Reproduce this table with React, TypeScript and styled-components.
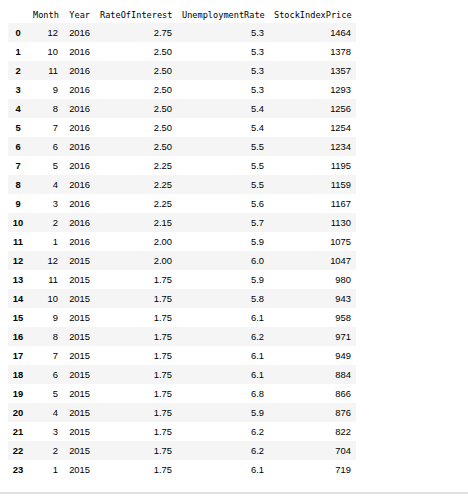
import React from "react";
import styled, { createGlobalStyle } from "styled-components";

const Global = createGlobalStyle`
  html, body { margin: 0; padding: 0; background: #fff; }
  body { width: 468px; height: 496px; overflow: hidden; }
`;

const Page = styled.div`
  width: 468px;
  height: 496px;
  display: flex;
  flex-direction: column;
  box-sizing: border-box;
`;

const Output = styled.div`
  flex: 1;
  padding: 0 0 0 8px;
`;

const Rule = styled.div`
  height: 2px;
  background: #e0e0e0;
  margin-bottom: 2px;
`;

const Table = styled.table`
  border-collapse: collapse;
  border-spacing: 0;
  table-layout: fixed;
  width: 348px;
  color: #000;
`;

const HeadCell = styled.th`
  font-family: "DejaVu Sans Mono", "Liberation Mono", monospace;
  font-size: 8.6px;
  font-weight: normal;
  text-align: right;
  height: 23px;
  box-sizing: border-box;
  padding: 0 5px 3px 5px;
  vertical-align: bottom;
  line-height: 10px;
  white-space: nowrap;
`;

const Row = styled.tr<{ $striped: boolean }>`
  background: ${(p) => (p.$striped ? "#f5f5f5" : "transparent")};
`;

const IndexCell = styled.th`
  font-family: "Liberation Sans", Arial, sans-serif;
  font-size: 9.4px;
  font-weight: bold;
  text-align: center;
  height: 19px;
  padding: 0;
  vertical-align: middle;
  line-height: 19px;
`;

const Cell = styled.td`
  font-family: "Liberation Sans", Arial, sans-serif;
  font-size: 9.4px;
  text-align: right;
  height: 19px;
  padding: 0 5px;
  vertical-align: middle;
  line-height: 19px;
  white-space: nowrap;
`;

const columns = ["Month", "Year", "RateOfInterest", "UnemploymentRate", "StockIndexPrice"];
const widths = [20, 35, 32, 82, 92, 87];

const data: [number, number, string, string, number][] = [
  [12, 2016, "2.75", "5.3", 1464],
  [10, 2016, "2.50", "5.3", 1378],
  [11, 2016, "2.50", "5.3", 1357],
  [9, 2016, "2.50", "5.3", 1293],
  [8, 2016, "2.50", "5.4", 1256],
  [7, 2016, "2.50", "5.4", 1254],
  [6, 2016, "2.50", "5.5", 1234],
  [5, 2016, "2.25", "5.5", 1195],
  [4, 2016, "2.25", "5.5", 1159],
  [3, 2016, "2.25", "5.6", 1167],
  [2, 2016, "2.15", "5.7", 1130],
  [1, 2016, "2.00", "5.9", 1075],
  [12, 2015, "2.00", "6.0", 1047],
  [11, 2015, "1.75", "5.9", 980],
  [10, 2015, "1.75", "5.8", 943],
  [9, 2015, "1.75", "6.1", 958],
  [8, 2015, "1.75", "6.2", 971],
  [7, 2015, "1.75", "6.1", 949],
  [6, 2015, "1.75", "6.1", 884],
  [5, 2015, "1.75", "6.8", 866],
  [4, 2015, "1.75", "5.9", 876],
  [3, 2015, "1.75", "6.2", 822],
  [2, 2015, "1.75", "6.2", 704],
  [1, 2015, "1.75", "6.1", 719],
];

export default function App() {
  return (
    <Page>
      <Global />
      <Output>
        <Table>
          <colgroup>
            {widths.map((w, i) => (
              <col key={i} style={{ width: w }} />
            ))}
          </colgroup>
          <thead>
            <tr>
              <HeadCell />
              {columns.map((c) => (
                <HeadCell key={c}>{c}</HeadCell>
              ))}
            </tr>
          </thead>
          <tbody>
            {data.map((r, i) => (
              <Row key={i} $striped={i % 2 === 0}>
                <IndexCell>{i}</IndexCell>
                {r.map((v, j) => (
                  <Cell key={j}>{v}</Cell>
                ))}
              </Row>
            ))}
          </tbody>
        </Table>
      </Output>
      <Rule />
    </Page>
  );
}
